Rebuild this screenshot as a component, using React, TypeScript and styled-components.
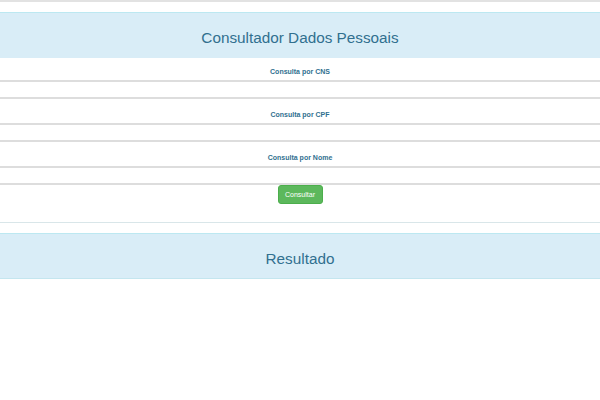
import styled, {createGlobalStyle} from 'styled-components'

const GlobalStyle = createGlobalStyle`
    html, body {
        margin: 0;
        padding: 0;
        background: #ffffff;
        font-family: "Liberation Sans", Arial, sans-serif;
    }
`;

const Page = styled.div`
    width: 600px;
    height: 400px;
    border-top: 2px solid #e2e2e2;
    box-sizing: border-box;
    padding-top: 10px;
    background: #ffffff;
`;

const PanelHeading = styled.div`
    height: 46px;
    box-sizing: border-box;
    padding-top: 6px;
    display: flex;
    align-items: center;
    justify-content: center;
    background-color: #d9edf7;
    border-top: 1px solid #bce8f1;
    border-bottom: 1px solid #d9edf7;
    color: #31708f;
    font-size: 15.3px;
`;

const Form = styled.form`
    display: flex;
    flex-direction: column;
`;

const Label = styled.label<{ $top: number }>`
    display: block;
    padding: ${props => props.$top}px 0 4px;
    line-height: 9px;
    text-align: center;
    font-size: 7px;
    font-weight: bold;
    color: #31708f;
`;

const Input = styled.input`
    display: block;
    width: 100%;
    height: 19px;
    box-sizing: border-box;
    margin: 0;
    padding: 0 8px;
    border: none;
    border-top: 2px solid #dddddd;
    border-bottom: 2px solid #dddddd;
    background: #ffffff;
    outline: none;
    font-family: inherit;
    font-size: 8px;
`;

const ButtonRow = styled.div`
    display: flex;
    justify-content: center;
`;

const Button = styled.button`
    width: 45px;
    height: 19px;
    padding: 0;
    border: 1px solid #4cae4c;
    border-radius: 3px;
    background-color: #5cb85c;
    color: #ffffff;
    font-family: inherit;
    font-size: 7px;
`;

const Divider = styled.hr`
    margin: 18px 0 10px;
    border: none;
    border-top: 1px solid #d9e6e9;
`;

const ResultPanel = styled(PanelHeading)`
    border-bottom: 1px solid #c4e6ef;
`;

const fields = [
    {label: 'Consulta por CNS', name: 'cns', top: 9},
    {label: 'Consulta por CPF', name: 'cpf', top: 11},
    {label: 'Consulta por Nome', name: 'nome', top: 11},
];

export default function App() {
    return (
        <>
            <GlobalStyle/>
            <Page>
                <PanelHeading>Consultador Dados Pessoais</PanelHeading>
                <Form onSubmit={e => e.preventDefault()}>
                    {fields.map(field => (
                        <div key={field.name}>
                            <Label $top={field.top} htmlFor={field.name}>{field.label}</Label>
                            <Input id={field.name} name={field.name}/>
                        </div>
                    ))}
                    <ButtonRow>
                        <Button type="submit">Consultar</Button>
                    </ButtonRow>
                </Form>
                <Divider/>
                <ResultPanel>Resultado</ResultPanel>
            </Page>
        </>
    )
}
